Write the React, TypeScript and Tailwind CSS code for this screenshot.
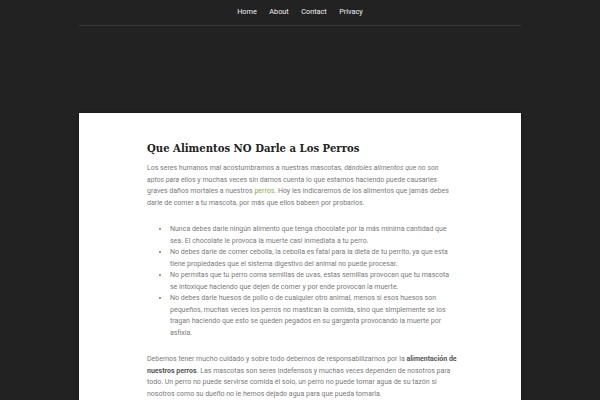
import React from "react";

export default function App() {
  const nav = ["Home", "About", "Contact", "Privacy"];
  return (
    <div className="min-h-[400px] bg-[#222222] font-['Roboto',sans-serif]">
      <div className="mx-auto w-[442px]">
        <nav className="flex h-[26px] items-center justify-center gap-[12.5px] border-b border-[#383838] text-[7.3px] text-[#f0f0f0]">
          {nav.map((n) => (
            <a key={n} href="#">
              {n}
            </a>
          ))}
        </nav>
      </div>
      <main className="mx-auto mt-[87px] w-[442px] bg-white pl-[68px] pr-[64px] pt-[30px] pb-10 shadow-[0_0_3px_rgba(0,0,0,0.4)]">
        <h1 className="font-['DejaVu_Serif',serif] text-[10.1px] font-bold leading-[12px] text-[#222]">
          Que Alimentos NO Darle a Los Perros
        </h1>
        <div className="mt-[8px] text-[7px] leading-[11.5px] text-[#7a7a7a]">
          <p>
            Los seres humanos mal acostumbramos a nuestras mascotas,{" "}
            <em>dándoles alimentos que no son aptos para</em> ellos y muchas veces sin darnos cuenta lo
            que estamos haciendo puede causarles graves daños mortales a nuestros{" "}
            <a href="#" className="text-[#7fb13f]">
              perros
            </a>
            . Hoy les indicaremos de los alimentos que jamás debes darle de comer a tu mascota, por más
            que ellos babeen por probarlos.
          </p>
          <ul className="mt-[15px] list-disc pl-[23px] marker:text-[#777]">
            <li>
              Nunca debes darle ningún alimento que tenga chocolate por la más mínima cantidad que sea.
              El chocolate le provoca la muerte casi inmediata a tu perro.
            </li>
            <li>
              No debes darle de comer cebolla, la cebolla es fatal para la dieta de tu perrito, ya que
              esta tiene propiedades que el sistema digestivo del animal no puede procesar.
            </li>
            <li>
              No permitas que tu perro coma semillas de uvas, estas semillas provocan que tu mascota se
              intoxique haciendo que dejen de comer y por ende provocan la muerte.
            </li>
            <li>
              No debes darle huesos de pollo o de cualquier otro animal, menos si esos huesos son
              pequeños, muchas veces los perros no mastican la comida, sino que simplemente se los
              tragan haciendo que esto se queden pegados en su garganta provocando la muerte por
              asfixia.
            </li>
          </ul>
          <p className="mt-[15px]">
            Debemos tener mucho cuidado y sobre todo debemos de responsabilizarnos por la{" "}
            <strong className="font-bold text-[#555]">alimentación de nuestros perros</strong>. Las
            mascotas son seres indefensos y muchas veces dependen de nosotros para todo. Un perro no
            puede servirse comida él solo, un perro no puede tomar agua de su tazón si nosotros como su
            dueño no le hemos dejado agua para que pueda tomarla.
          </p>
        </div>
      </main>
    </div>
  );
}
